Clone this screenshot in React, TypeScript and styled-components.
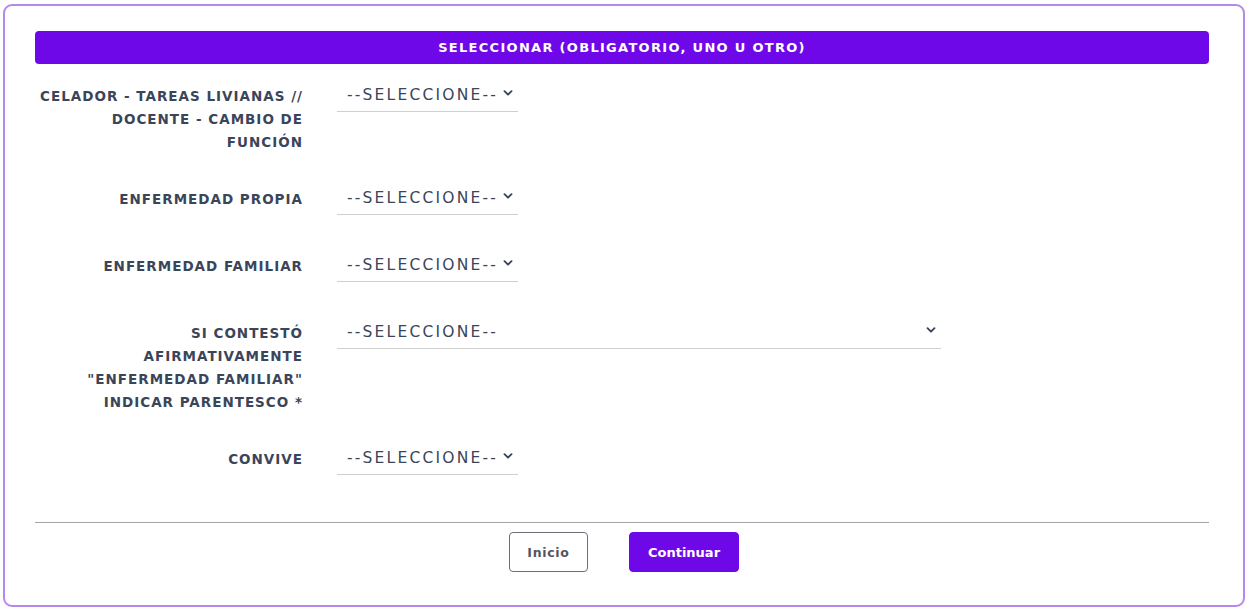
import React from 'react';
import styled, { createGlobalStyle } from 'styled-components';

const font = "'DejaVu Sans', 'Noto Sans', sans-serif";

const GlobalStyle = createGlobalStyle`
	html, body {
		margin: 0;
		padding: 0;
		background: #ffffff;
	}
	body {
		font-family: ${font};
	}
`;

const Card = styled.div`
	box-sizing: border-box;
	width: 1242px;
	height: 603px;
	margin: 4px 0 0 3px;
	padding: 25px 34px 0 30px;
	border: 2px solid #b587f0;
	border-radius: 9px;
	background: #fff;
`;

const Header = styled.div`
	height: 33px;
	border-radius: 4px;
	background: #6f08e8;
	color: #fff;
	font-size: 13px;
	font-weight: 700;
	display: flex;
	align-items: center;
	justify-content: center;
	letter-spacing: 1.3px;
`;

const Form = styled.div`
	padding-top: 21px;
	min-height: 458px;
	box-sizing: border-box;
`;

const Row = styled.div`
	display: grid;
	grid-template-columns: 268px auto;
	column-gap: 34px;
	align-items: start;
	min-height: 33px;
	margin-bottom: 34px;
`;

const Label = styled.label`
	text-align: right;
	font-size: 13.5px;
	font-weight: 700;
	line-height: 23px;
	letter-spacing: 1px;
	color: #3b4559;
`;

const SelectBox = styled.div<{ $wide?: boolean }>`
	position: relative;
	width: ${(p) => (p.$wide ? '604px' : '181px')};
`;

const Select = styled.select`
	appearance: none;
	width: 100%;
	height: 25px;
	margin: 0;
	padding: 0 0 7px 10px;
	border: none;
	border-bottom: 1px solid #cfcfcf;
	background: transparent;
	font-family: ${font};
	font-size: 15.5px;
	color: #3b4559;
	letter-spacing: 2.2px;
	line-height: 16px;
	outline: none;
`;

const Chevron = styled.svg`
	position: absolute;
	right: 5px;
	top: 3px;
	width: 10px;
	height: 10px;
	pointer-events: none;
`;

const Divider = styled.hr`
	margin: 0;
	border: none;
	border-top: 1px solid #a3a3a3;
`;

const Actions = styled.div`
	display: flex;
	justify-content: center;
	gap: 41px;
	padding: 9px 0 0 4px;
`;

const Button = styled.button<{ $primary?: boolean }>`
	height: 40px;
	padding: 0 16px;
	border-radius: 4px;
	font-family: ${font};
	font-size: ${(p) => (p.$primary ? '13px' : '12.5px')};
	font-weight: 700;
	letter-spacing: ${(p) => (p.$primary ? '0' : '0.7px')};
	cursor: pointer;
	border: 1px solid ${(p) => (p.$primary ? '#6f08e8' : '#6d6d78')};
	background: ${(p) => (p.$primary ? '#6f08e8' : '#fff')};
	color: ${(p) => (p.$primary ? '#fff' : '#55555f')};
	min-width: ${(p) => (p.$primary ? '110px' : '79px')};
`;

const ChevronIcon = () => (
	<Chevron viewBox="0 0 10 10">
		<path d="M1.5 3.2 L5 6.7 L8.5 3.2" fill="none" stroke="#3b4559" strokeWidth="1.9" strokeLinecap="round" strokeLinejoin="round" />
	</Chevron>
);

const fields = [
	{ label: ['CELADOR - TAREAS LIVIANAS //', 'DOCENTE - CAMBIO DE', 'FUNCIÓN'] },
	{ label: ['ENFERMEDAD PROPIA'] },
	{ label: ['ENFERMEDAD FAMILIAR'] },
	{ label: ['SI CONTESTÓ', 'AFIRMATIVAMENTE', '"ENFERMEDAD FAMILIAR"', 'INDICAR PARENTESCO *'], wide: true },
	{ label: ['CONVIVE'] },
];

export default function App() {
	return (
		<>
			<GlobalStyle />
			<Card>
				<Header>SELECCIONAR (OBLIGATORIO, UNO U OTRO)</Header>
				<Form>
					{fields.map((f, i) => (
						<Row key={i}>
							<Label>
								{f.label.map((l, j) => (
									<div key={j}>{l}</div>
								))}
							</Label>
							<SelectBox $wide={f.wide}>
								<Select defaultValue="">
									<option value="">--SELECCIONE--</option>
								</Select>
								<ChevronIcon />
							</SelectBox>
						</Row>
					))}
				</Form>
				<Divider />
				<Actions>
					<Button>Inicio</Button>
					<Button $primary>Continuar</Button>
				</Actions>
			</Card>
		</>
	);
}
